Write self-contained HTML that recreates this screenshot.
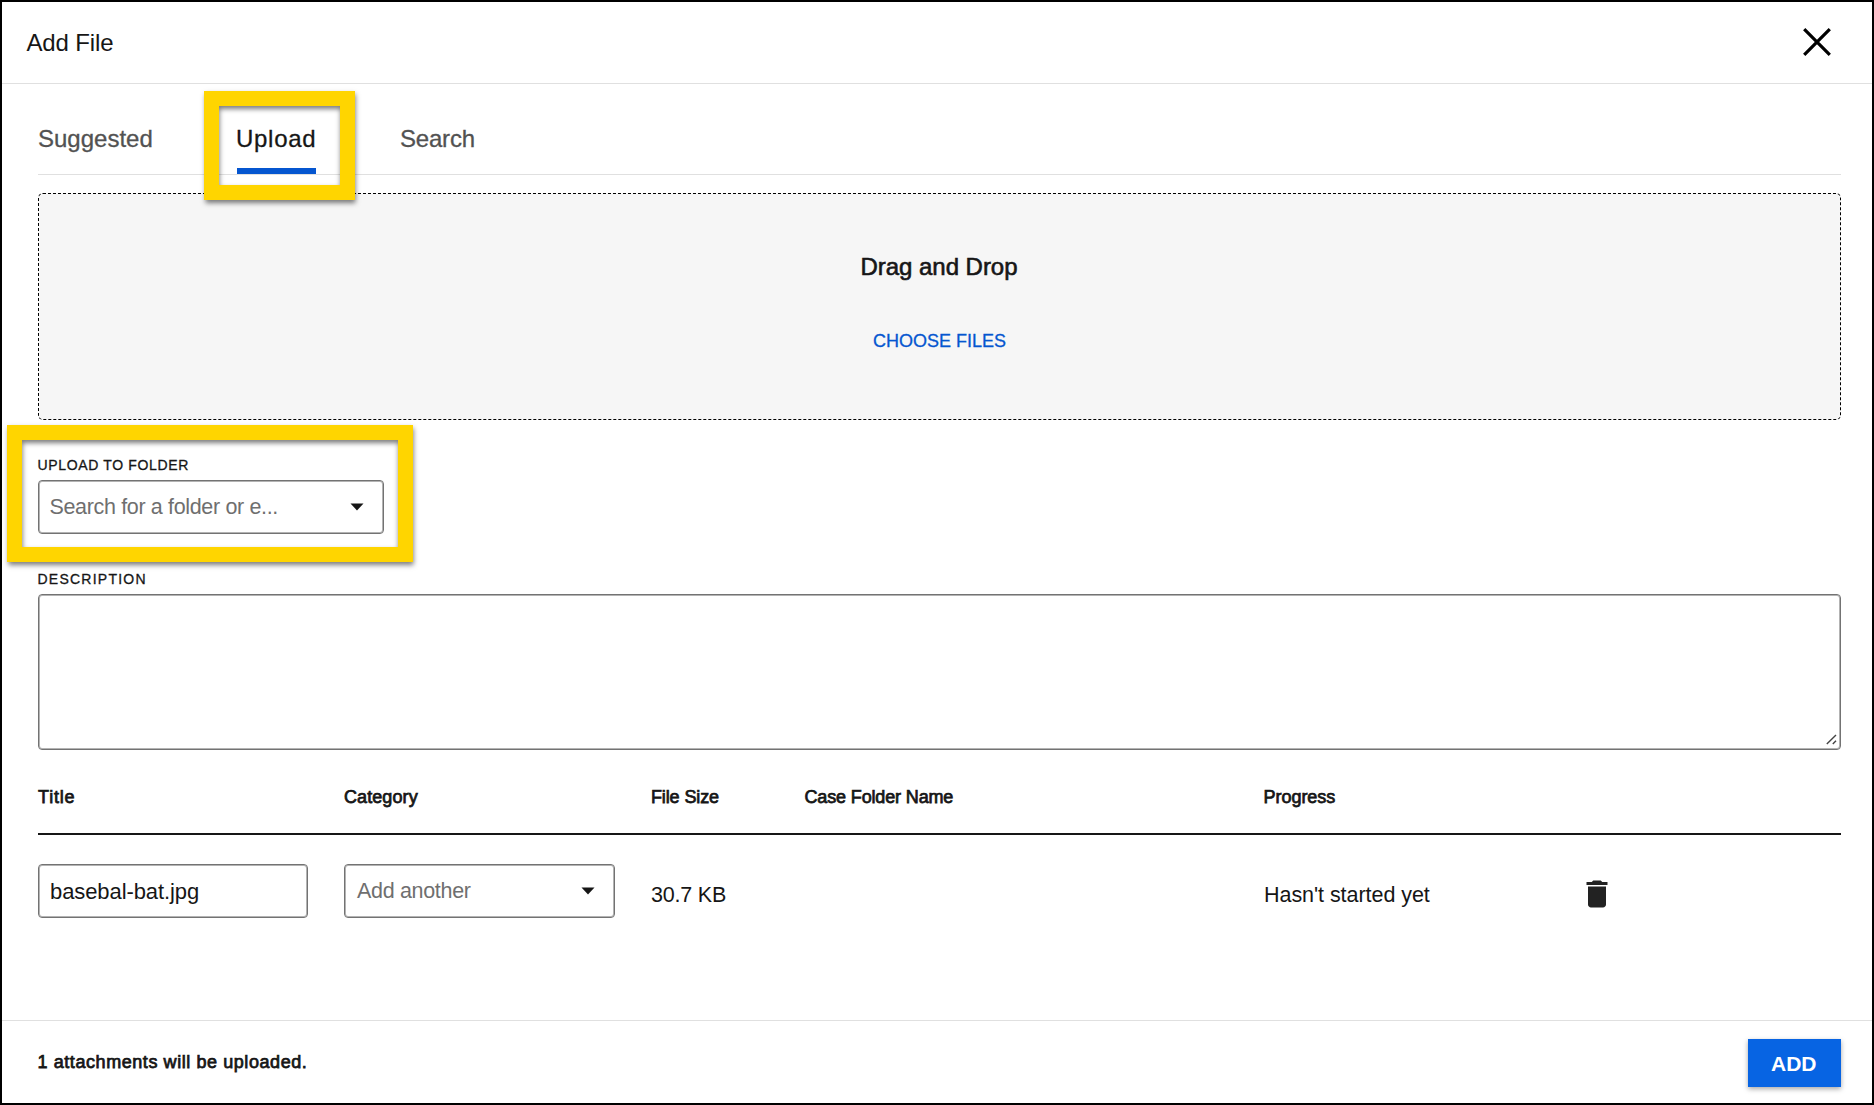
<!DOCTYPE html><html><head><meta charset='utf-8'><style>
html,body{margin:0;padding:0;}
body{width:1874px;height:1105px;position:relative;overflow:hidden;background:#fff;font-family:"Liberation Sans",sans-serif;}
.t{position:absolute;white-space:pre;line-height:1;font-family:"Liberation Sans",sans-serif;}
.abs{position:absolute;box-sizing:border-box;}
</style></head><body>

<div class="abs" style="left:0;top:0;width:1874px;height:1105px;border:2px solid #000;"></div>
<div class="abs" style="left:2px;top:83px;width:1870px;height:1px;background:#e0e0e0;"></div>
<svg class="abs" style="left:1803px;top:28px" width="28" height="28" viewBox="0 0 28 28"><path d="M1.2 1.2L26.8 26.8M26.8 1.2L1.2 26.8" stroke="#000" stroke-width="3.2" fill="none"/></svg>
<div class="abs" style="left:38px;top:174px;width:1803px;height:1px;background:#e0e0e0;"></div>
<div class="abs" style="left:237px;top:168px;width:79px;height:6px;background:#0556d0;"></div>
<div class="abs" style="left:38px;top:193px;width:1803px;height:227px;border:1px dashed #000;border-radius:5px;background:#f6f6f6;"></div>
<div class="abs" style="left:38px;top:480px;width:346px;height:54px;border:1px solid #737373;box-shadow:inset 0 0 0 1px #b3b3b3;border-radius:4px;background:#fff;"></div>
<svg class="abs" style="left:350px;top:503px" width="14" height="8" viewBox="0 0 14 8"><path d="M0.5 0.5H13.5L7 7.5Z" fill="#161616"/></svg>
<div class="abs" style="left:38px;top:594px;width:1803px;height:156px;border:1px solid #737373;box-shadow:inset 0 0 0 1px #b3b3b3;border-radius:4px;background:#fff;"></div>
<svg class="abs" style="left:1820px;top:730px" width="20" height="20" viewBox="0 0 20 20"><path d="M6.8 14.1L16 4.9M12.8 14.1L16 10.8" stroke="#444" stroke-width="1.4" fill="none"/></svg>
<div class="abs" style="left:38px;top:833px;width:1803px;height:2px;background:#161616;"></div>
<div class="abs" style="left:38px;top:864px;width:270px;height:54px;border:1px solid #737373;box-shadow:inset 0 0 0 1px #b3b3b3;border-radius:4px;background:#fff;"></div>
<div class="abs" style="left:344px;top:864px;width:271px;height:54px;border:1px solid #737373;box-shadow:inset 0 0 0 1px #b3b3b3;border-radius:4px;background:#fff;"></div>
<svg class="abs" style="left:581px;top:887px" width="14" height="8" viewBox="0 0 14 8"><path d="M0.5 0.5H13.5L7 7.5Z" fill="#161616"/></svg>
<svg class="abs" style="left:1579px;top:875.5px" width="36" height="36" viewBox="0 0 24 24"><path d="M6 19c0 1.1.9 2 2 2h8c1.1 0 2-.9 2-2V7H6v12zM19 4h-3.5l-1-1h-5l-1 1H5v2h14V4z" fill="#222"/></svg>
<div class="abs" style="left:2px;top:1020px;width:1870px;height:1px;background:#e0e0e0;"></div>
<div class="abs" style="left:1748px;top:1039px;width:93px;height:48px;background:#0764e3;box-shadow:0 2px 5px rgba(0,0,0,0.35);"></div>
<div class="abs" style="left:204px;top:91px;width:151px;height:109px;border:15px solid #ffd500;box-shadow:0.5px 3px 5px rgba(0,0,0,0.52), inset 0.5px 3px 5px rgba(0,0,0,0.52);"></div>
<div class="abs" style="left:7px;top:425px;width:406px;height:137px;border:15px solid #ffd500;box-shadow:0.5px 3px 5px rgba(0,0,0,0.52), inset 0.5px 3px 5px rgba(0,0,0,0.52);"></div>

<div class="t" id="addfile" style="left:26.50px;top:30.68px;font-size:24px;font-weight:400;color:#161616;letter-spacing:-0.143px;">Add File</div>
<div class="t" id="sugg" style="left:38.00px;top:126.68px;font-size:24px;font-weight:400;color:#525252;letter-spacing:0.000px;-webkit-text-stroke:0.3px #525252;">Suggested</div>
<div class="t" id="upl" style="left:236.00px;top:126.68px;font-size:24px;font-weight:400;color:#161616;letter-spacing:0.720px;-webkit-text-stroke:0.3px #161616;">Upload</div>
<div class="t" id="srch" style="left:400.00px;top:126.68px;font-size:24px;font-weight:400;color:#525252;letter-spacing:-0.200px;-webkit-text-stroke:0.3px #525252;">Search</div>
<div class="t" id="dnd" style="left:860.50px;top:254.68px;font-size:24px;font-weight:400;color:#161616;letter-spacing:-0.033px;-webkit-text-stroke:0.6px #161616;">Drag and Drop</div>
<div class="t" id="choose" style="left:873.00px;top:331.76px;font-size:18px;font-weight:400;color:#0556d0;letter-spacing:0.000px;-webkit-text-stroke:0.3px #0556d0;">CHOOSE FILES</div>
<div class="t" id="uplabel" style="left:37.50px;top:458.15px;font-size:14px;font-weight:400;color:#161616;letter-spacing:0.653px;-webkit-text-stroke:0.3px #161616;">UPLOAD TO FOLDER</div>
<div class="t" id="ph" style="left:49.50px;top:496.80px;font-size:21.5px;font-weight:400;color:#6f6f6f;letter-spacing:-0.346px;">Search for a folder or e...</div>
<div class="t" id="desc" style="left:37.50px;top:572.15px;font-size:14px;font-weight:400;color:#161616;letter-spacing:1.240px;-webkit-text-stroke:0.3px #161616;">DESCRIPTION</div>
<div class="t" id="h_title" style="left:38.00px;top:787.76px;font-size:18px;font-weight:400;color:#161616;letter-spacing:0.800px;-webkit-text-stroke:0.75px #161616;">Title</div>
<div class="t" id="h_cat" style="left:344.00px;top:787.76px;font-size:18px;font-weight:400;color:#161616;letter-spacing:0.086px;-webkit-text-stroke:0.75px #161616;">Category</div>
<div class="t" id="h_size" style="left:651.00px;top:787.76px;font-size:18px;font-weight:400;color:#161616;letter-spacing:-0.125px;-webkit-text-stroke:0.75px #161616;">File Size</div>
<div class="t" id="h_case" style="left:804.50px;top:787.76px;font-size:18px;font-weight:400;color:#161616;letter-spacing:-0.147px;-webkit-text-stroke:0.75px #161616;">Case Folder Name</div>
<div class="t" id="h_prog" style="left:1263.50px;top:787.76px;font-size:18px;font-weight:400;color:#161616;letter-spacing:-0.029px;-webkit-text-stroke:0.75px #161616;">Progress</div>
<div class="t" id="fname" style="left:50.00px;top:881.38px;font-size:22px;font-weight:400;color:#161616;letter-spacing:-0.086px;">basebal-bat.jpg</div>
<div class="t" id="addano" style="left:357.00px;top:881.30px;font-size:21.5px;font-weight:400;color:#6f6f6f;letter-spacing:-0.320px;">Add another</div>
<div class="t" id="fsize" style="left:651.00px;top:885.40px;font-size:21.5px;font-weight:400;color:#161616;letter-spacing:-0.200px;">30.7 KB</div>
<div class="t" id="prog" style="left:1264.00px;top:884.60px;font-size:21.5px;font-weight:400;color:#161616;letter-spacing:-0.047px;">Hasn&#39;t started yet</div>
<div class="t" id="attach" style="left:37.50px;top:1052.76px;font-size:18px;font-weight:400;color:#161616;letter-spacing:0.573px;-webkit-text-stroke:0.75px #161616;">1 attachments will be uploaded.</div>
<div class="t" id="addbtn" style="left:1771.00px;top:1053.22px;font-size:21px;font-weight:700;color:#ffffff;letter-spacing:0.000px;">ADD</div>
</body></html>
